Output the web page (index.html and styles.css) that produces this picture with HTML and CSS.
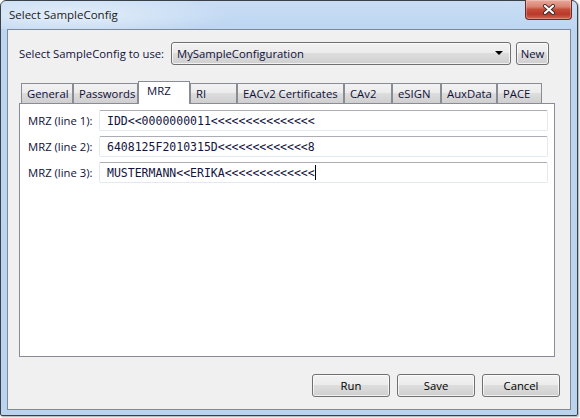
FILE: index.html
```html
<!DOCTYPE html>
<html>
<head>
<meta charset="utf-8">
<link rel="stylesheet" href="styles.css">
</head>
<body>
<div class="window">
  <div class="titlebar">
    <span class="title">Select SampleConfig</span>
    <div class="close">
      <svg width="14" height="11" viewBox="0 0 14 11">
        <path d="M3 2 L11 9 M11 2 L3 9" stroke="#3a2a2a" stroke-width="4" stroke-linecap="round"/>
        <path d="M3 2 L11 9 M11 2 L3 9" stroke="#ffffff" stroke-width="2.2" stroke-linecap="round"/>
      </svg>
    </div>
  </div>
  <div class="client">
    <div class="select-row">
      <span class="select-label">Select SampleConfig to use:</span>
      <div class="combo">
        <span class="combo-text">MySampleConfiguration</span>
        <span class="combo-arrow"></span>
      </div>
      <div class="btn btn-new">New</div>
    </div>
    <div class="tabs">
      <div class="tab-strip">
        <div class="tab t-general">General</div>
        <div class="tab t-passwords">Passwords</div>
        <div class="tab t-mrz selected">MRZ</div>
        <div class="tab t-ri">RI</div>
        <div class="tab t-eac">EACv2 Certificates</div>
        <div class="tab t-cav2">CAv2</div>
        <div class="tab t-esign">eSIGN</div>
        <div class="tab t-aux">AuxData</div>
        <div class="tab t-pace">PACE</div>
      </div>
      <div class="tab-pane">
        <div class="field-row">
          <span class="field-label">MRZ (line 1):</span>
          <div class="field">IDD&lt;&lt;0000000011&lt;&lt;&lt;&lt;&lt;&lt;&lt;&lt;&lt;&lt;&lt;&lt;&lt;&lt;&lt;</div>
        </div>
        <div class="field-row">
          <span class="field-label">MRZ (line 2):</span>
          <div class="field">6408125F2010315D&lt;&lt;&lt;&lt;&lt;&lt;&lt;&lt;&lt;&lt;&lt;&lt;&lt;8</div>
        </div>
        <div class="field-row">
          <span class="field-label">MRZ (line 3):</span>
          <div class="field">MUSTERMANN&lt;&lt;ERIKA&lt;&lt;&lt;&lt;&lt;&lt;&lt;&lt;&lt;&lt;&lt;&lt;&lt;<span class="caret"></span></div>
        </div>
      </div>
    </div>
    <div class="actions">
      <div class="btn btn-action">Run</div>
      <div class="btn btn-action">Save</div>
      <div class="btn btn-action">Cancel</div>
    </div>
  </div>
</div>
</body>
</html>
```
FILE: styles.css
```css
* { box-sizing: border-box; }
html, body { margin: 0; padding: 0; background: #ffffff; }
body {
  width: 580px;
  height: 418px;
  font-family: "Open Sans", "Noto Sans", sans-serif;
  font-size: 11.3px;
  color: #000;
}
.window {
  width: 578px;
  height: 416px;
  border: 1px solid #3a4048;
  border-radius: 6px 6px 2px 2px;
  background: linear-gradient(to bottom, #c9def5 0px, #bcd5f1 30px, #bad4f0 100%);
  padding: 0 6px 5px 6px;
  display: flex;
  flex-direction: column;
  box-shadow: 1px 1px 2px rgba(0,0,0,0.35);
}
.titlebar {
  height: 28px;
  display: flex;
  align-items: flex-start;
  background: radial-gradient(ellipse 160px 22px at 70px 15px, rgba(255,255,255,0.55), rgba(255,255,255,0) 100%);
  margin: 0 -6px 0 -6px;
  padding-left: 8px;
  padding-right: 5px;
}
.title {
  font-size: 11.5px;
  color: #1a1a1a;
  line-height: 28px;
  flex: 1;
}
.close {
  width: 47px;
  height: 20px;
  margin-top: -1px;
  border: 1px solid #6e2a22;
  border-top: none;
  border-radius: 0 0 4px 4px;
  background: linear-gradient(to bottom, #e9a99b 0%, #d98372 35%, #c44c38 50%, #b8392a 75%, #d26b52 100%);
  display: flex;
  align-items: center;
  justify-content: center;
  box-shadow: inset 0 0 0 1px rgba(255,255,255,0.25);
}
.close svg { display: block; }
.client {
  width: 564px;
  height: 381px;
  border: 1px solid #7f8a97;
  background: #f0f0f0;
  padding: 12px 0 0 11px;
  display: flex;
  flex-direction: column;
}
.select-row {
  display: flex;
  align-items: center;
  height: 23px;
}
.select-label {
  width: 152px;
  white-space: nowrap;
  color: #10103a;
  padding-bottom: 1px;
}
.combo {
  width: 340px;
  height: 23px;
  border: 1px solid #707070;
  border-radius: 3px;
  background: linear-gradient(to bottom, #f2f2f2 0%, #ebebeb 50%, #dddddd 50%, #cfcfcf 100%);
  box-shadow: inset 0 0 0 1px rgba(255,255,255,0.7);
  display: flex;
  align-items: center;
  padding: 0 7px 1px 5px;
}
.combo-text { flex: 1; color: #10103a; }
.combo-arrow {
  width: 0;
  height: 0;
  border-left: 4px solid transparent;
  border-right: 4px solid transparent;
  border-top: 4px solid #000;
}
.btn {
  height: 23px;
  border: 1px solid #707070;
  border-radius: 3px;
  background: linear-gradient(to bottom, #f2f2f2 0%, #ebebeb 50%, #dddddd 50%, #cfcfcf 100%);
  box-shadow: inset 0 0 0 1px rgba(255,255,255,0.7);
  display: flex;
  align-items: center;
  justify-content: center;
  color: #000;
  padding-bottom: 1px;
}
.btn-new {
  width: 33px;
  margin-left: 5px;
  color: #10103a;
}
.tabs {
  margin-top: 16px;
  display: flex;
  flex-direction: column;
}
.tab-strip {
  height: 22px;
  display: flex;
  align-items: flex-end;
  padding-left: 2px;
}
.tab {
  height: 20px;
  border: 1px solid #898c95;
  border-bottom: none;
  background: linear-gradient(to bottom, #f2f2f2 0%, #ebebeb 50%, #dddddd 50%, #cfcfcf 100%);
  display: flex;
  align-items: center;
  justify-content: flex-start;
  white-space: nowrap;
  padding: 0 0 1px 5px;
  color: #10103a;
}
.tab.selected {
  height: 23px;
  margin-bottom: -1px;
  background: #ffffff;
  position: relative;
  z-index: 1;
  align-items: flex-start;
  padding: 1px 0 0 8px;
}
.t-general { width: 52px; }
.t-passwords { width: 65px; }
.t-mrz { width: 52px; }
.t-ri { width: 47px; }
.t-eac { width: 107px; }
.t-cav2 { width: 48px; }
.t-esign { width: 49px; }
.t-aux { width: 56px; }
.t-pace { width: 45px; }
.tab-pane {
  width: 536px;
  height: 254px;
  border: 1px solid #898c95;
  background: #ffffff;
  padding: 6px 6px 0 8px;
  display: flex;
  flex-direction: column;
  gap: 5px;
}
.field-row {
  display: flex;
  align-items: center;
  height: 21px;
}
.field-label {
  width: 71px;
  white-space: nowrap;
  color: #10103a;
}
.field {
  width: 449px;
  height: 21px;
  border: 1px solid #e3e9ef;
  border-top-color: #abadb3;
  border-radius: 2px;
  background: #fff;
  font-family: "DejaVu Sans Mono", "Liberation Mono", monospace;
  font-size: 11.5px;
  color: #141440;
  padding-left: 7px;
  display: flex;
  align-items: center;
  white-space: pre;
}
.caret {
  display: inline-block;
  width: 1px;
  height: 15px;
  background: #000;
}
.actions {
  margin-top: 17px;
  display: flex;
  justify-content: flex-end;
  gap: 7px;
  padding-right: 10px;
}
.btn-action { width: 78px; }
```
